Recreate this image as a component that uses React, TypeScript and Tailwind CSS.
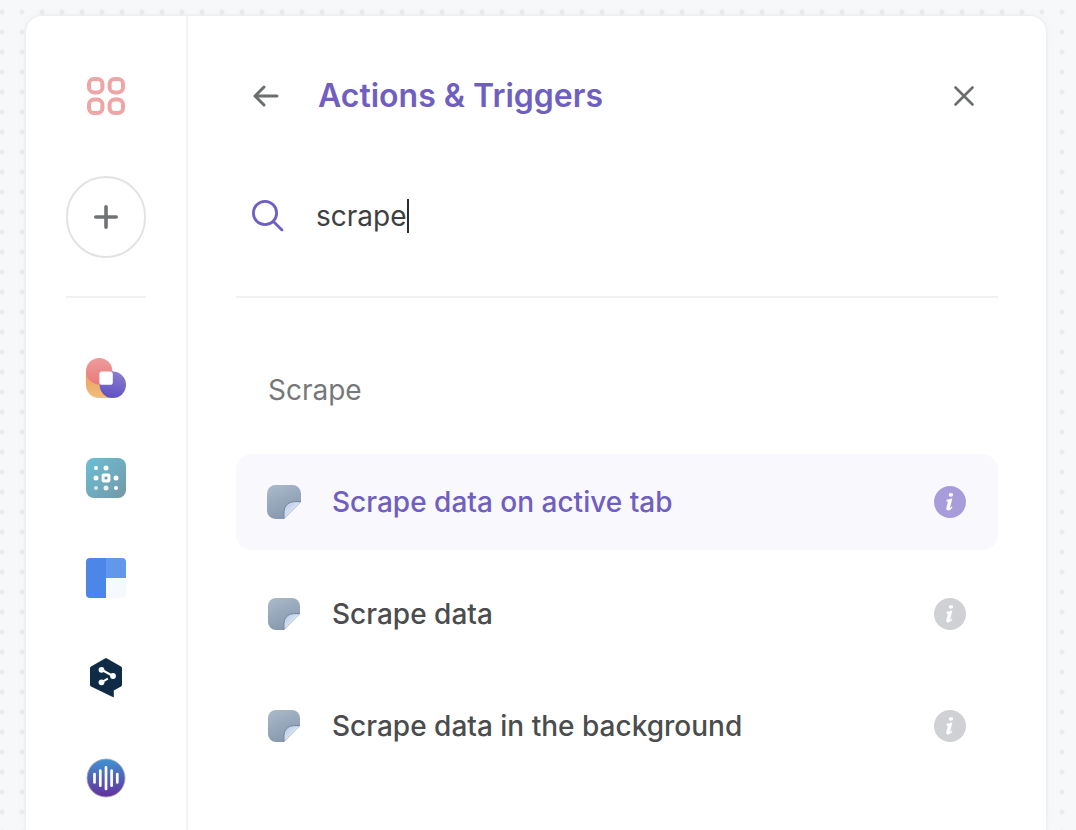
import { useState } from "react";
import clsx from "clsx";

const actions = [
  { id: "active-tab", label: "Scrape data on active tab" },
  { id: "scrape", label: "Scrape data" },
  { id: "background", label: "Scrape data in the background" },
];

function GridIcon() {
  return (
    <svg width="40" height="40" viewBox="0 0 40 40" fill="none" stroke="#eea5a6" strokeWidth="4">
      <rect x="3" y="3" width="13.4" height="13.4" rx="5" />
      <rect x="23.6" y="3" width="13.4" height="13.4" rx="5" />
      <rect x="3" y="23.6" width="13.4" height="13.4" rx="5" />
      <rect x="23.6" y="23.6" width="13.4" height="13.4" rx="5" />
    </svg>
  );
}

function PlusIcon() {
  return (
    <svg width="24" height="24" viewBox="0 0 24 24" stroke="#707374" strokeWidth="3.6" strokeLinecap="round">
      <path d="M12 1.8v20.4M1.8 12h20.4" />
    </svg>
  );
}

function BlobLogo() {
  return (
    <svg width="40" height="40" viewBox="0 0 40 40">
      <defs>
        <linearGradient id="blobRed" x1="0" y1="0" x2="0" y2="1">
          <stop offset="0" stopColor="#ee9c9b" />
          <stop offset="1" stopColor="#e9797c" />
        </linearGradient>
        <linearGradient id="blobBlue" x1="0.6" y1="0" x2="0.4" y2="1">
          <stop offset="0" stopColor="#8c7ccc" />
          <stop offset="1" stopColor="#5c50c6" />
        </linearGradient>
        <linearGradient id="blobYellow" x1="0" y1="0" x2="0" y2="1">
          <stop offset="0" stopColor="#e9a05f" />
          <stop offset="1" stopColor="#f2bd7a" />
        </linearGradient>
      </defs>
      <path d="M0 13h27v27H13A13 13 0 0 1 0 27z" fill="url(#blobYellow)" />
      <circle cx="13.2" cy="13.2" r="13.2" fill="url(#blobRed)" />
      <circle cx="26.8" cy="26.8" r="13.2" fill="url(#blobBlue)" />
      <rect x="13.4" y="13.4" width="13.4" height="13.4" rx="2.6" fill="#fff" />
    </svg>
  );
}

function DotsLogo() {
  return (
    <svg width="40" height="40" viewBox="0 0 40 40" fill="#fff">
      <defs>
        <linearGradient id="dotsBg" x1="0" y1="0" x2="1" y2="1">
          <stop offset="0" stopColor="#6bbfd6" />
          <stop offset="1" stopColor="#7598a6" />
        </linearGradient>
      </defs>
      <rect width="40" height="40" rx="8" fill="url(#dotsBg)" />
      <circle cx="10" cy="10" r="2" />
      <circle cx="20" cy="10" r="2.5" />
      <circle cx="10" cy="20" r="2.5" />
      <circle cx="30" cy="20" r="2.5" />
      <circle cx="10" cy="30" r="2.1" opacity="0.7" />
      <circle cx="20" cy="30" r="2.5" opacity="0.85" />
      <circle cx="30" cy="30" r="2" />
      <rect x="15.6" y="15.6" width="8.8" height="8.8" rx="1.8" />
      <rect x="18.6" y="18.6" width="2.8" height="2.8" fill="#6f98bd" />
    </svg>
  );
}

function BlocksLogo() {
  return (
    <svg width="40" height="40" viewBox="0 0 40 40">
      <path d="M20 0H4a4 4 0 0 0-4 4v32a4 4 0 0 0 4 4h16z" fill="#4c86e9" />
      <path d="M20 0h16a4 4 0 0 1 4 4v16H20z" fill="#6198ea" />
      <path d="M20 20h20v16a4 4 0 0 1-4 4H20z" fill="#f6fafe" />
    </svg>
  );
}

function HexLogo() {
  return (
    <svg width="40" height="40" viewBox="0 0 40 40">
      <path
        d="M19 .4a2 2 0 0 1 2 0l14 8a2 2 0 0 1 1 1.8v16.4a2 2 0 0 1-1 1.8l-7.2 4.2v7L5 28.4a2 2 0 0 1-1-1.8V10.2a2 2 0 0 1 1-1.8z"
        fill="#102b46"
      />
      <path d="M16 12l11 6M15.5 24.3l6.3-3.6" stroke="#fff" strokeWidth="2" />
      <circle cx="15.5" cy="11.8" r="2.9" fill="#fff" />
      <circle cx="27" cy="18" r="2.9" fill="#fff" />
      <circle cx="15.5" cy="24.3" r="2.9" fill="#fff" />
    </svg>
  );
}

function WaveLogo() {
  return (
    <svg width="40" height="40" viewBox="0 0 40 40">
      <defs>
        <linearGradient id="waveBg" x1="0" y1="0" x2="0" y2="1">
          <stop offset="0" stopColor="#3f93d2" />
          <stop offset="1" stopColor="#642f9c" />
        </linearGradient>
      </defs>
      <circle cx="20" cy="20" r="19" fill="url(#waveBg)" stroke="#a8a6b8" strokeWidth="0.8" />
      <path
        d="M8.5 16v8.4M14.3 12.5v15.2M20 9.4v21.6M25.6 12.5v15.2M31.3 16v8.4"
        stroke="#fff"
        strokeWidth="2.7"
        strokeLinecap="round"
      />
    </svg>
  );
}

function StickerIcon({ large }: { large: boolean }) {
  return (
    <svg className={large ? "size-[34px]" : "size-8"} viewBox="0 0 32 32">
      <defs>
        <linearGradient id="stickerBody" x1="0.2" y1="0" x2="0.6" y2="1">
          <stop offset="0" stopColor="#a9b8c9" />
          <stop offset="1" stopColor="#8597ad" />
        </linearGradient>
        <linearGradient id="stickerFold" x1="0" y1="0" x2="0.6" y2="0.6">
          <stop offset="0" stopColor="#b3c3de" />
          <stop offset="1" stopColor="#dce7f8" />
        </linearGradient>
      </defs>
      <path d="M8 0h16a8 8 0 0 1 8 8v8L16 32H8a8 8 0 0 1-8-8V8a8 8 0 0 1 8-8z" fill="url(#stickerBody)" />
      <path d="M31.6 16L16 31.6V25a9.3 9.3 0 0 1 9.3-9.3z" fill="url(#stickerFold)" />
      <path d="M16 31.6V25a9.3 9.3 0 0 1 9.3-9.3h6.5" fill="none" stroke="#71839b" strokeWidth="0.9" />
    </svg>
  );
}

function InfoIcon() {
  return (
    <svg width="32" height="32" viewBox="0 0 32 32">
      <circle cx="16" cy="16" r="16" fill="currentColor" />
      <ellipse cx="16.9" cy="8.9" rx="2.2" ry="1.8" fill="#fff" />
      <path
        d="M12.6 13.8c1.9-.1 3.5-.5 5-1.2l.7.2-2.1 8.2c-.2.8.1 1 .5.7.4-.3.7-.7 1-1.1l.8.5c-1.1 2.1-2.6 3.3-4.3 3.3-1.6 0-2.2-1.1-1.8-2.7l1.4-5.4c.1-.7-.2-1-1.4-1.1z"
        fill="#fff"
      />
    </svg>
  );
}

const apps = [
  { name: "Workspace", icon: <BlobLogo /> },
  { name: "Dots", icon: <DotsLogo /> },
  { name: "Blocks", icon: <BlocksLogo /> },
  { name: "Translate", icon: <HexLogo /> },
  { name: "Audio", icon: <WaveLogo /> },
];

export default function App() {
  const [query, setQuery] = useState("scrape");
  const [selected, setSelected] = useState("active-tab");

  const results = actions.filter((a) => a.label.toLowerCase().includes(query.toLowerCase()));

  return (
    <div className="flex min-h-screen bg-[#f7f8fa] bg-[radial-gradient(circle,#e9ebed_2px,transparent_3px)] bg-size-[20px_20px] bg-position-[-8px_2px] pt-4 pr-[30px] pl-[26px] font-['Inter',sans-serif]">
      <div className="flex flex-1 rounded-t-2xl bg-white shadow-[0_0_3px_1px_rgba(0,0,0,0.05),0_0_20px_rgba(0,0,0,0.02)]">
        <nav className="flex w-[162px] shrink-0 flex-col items-center border-r-2 border-[#f3f3f4] px-10 pt-[60px]">
          <button type="button" aria-label="All apps">
            <GridIcon />
          </button>
          <button
            type="button"
            aria-label="Add app"
            className="mt-[60px] flex h-[82px] w-20 items-center justify-center rounded-full border-2 border-[#e3e3e4]"
          >
            <PlusIcon />
          </button>
          <hr className="mt-[38px] w-full border-t-2 border-[#f1f1f2]" />
          <div className="mt-[60px] flex flex-col gap-[60px]">
            {apps.map((app) => (
              <button key={app.name} type="button" aria-label={app.name}>
                {app.icon}
              </button>
            ))}
          </div>
        </nav>

        <main className="min-w-0 flex-1 px-12 pt-[60px]">
          <header className="flex h-10 items-center pr-6 pl-4">
            <button type="button" aria-label="Back">
              <svg width="28" height="28" viewBox="0 0 28 28" fill="none" stroke="#6b6d6e" strokeWidth="3" strokeLinecap="round" strokeLinejoin="round">
                <path d="M25 14H3M12 5l-9 9 9 9" />
              </svg>
            </button>
            <h1 className="ml-[38px] flex-1 text-[32px] leading-10 font-semibold text-[#6f5fc0]">Actions &amp; Triggers</h1>
            <button type="button" aria-label="Close">
              <svg width="20" height="20" viewBox="0 0 20 20" stroke="#6b6d6e" strokeWidth="2.6" strokeLinecap="round">
                <path d="M1.5 1.5l17 17M18.5 1.5l-17 17" />
              </svg>
            </button>
          </header>

          <label className="mt-20 flex h-10 items-center pl-4">
            <svg width="32" height="32" viewBox="0 0 32 32" fill="none" stroke="#6f5fc0" strokeWidth="2.8" strokeLinecap="round">
              <circle cx="13" cy="13" r="11.6" />
              <path d="M21.4 21.4l8.6 8.6" />
            </svg>
            <input
              type="text"
              aria-label="Search actions"
              value={query}
              onChange={(e) => setQuery(e.target.value)}
              className="ml-8 field-sizing-content text-[28px] leading-10 text-[#3d3f40] caret-transparent outline-none"
            />
            <span className="h-[34px] w-0.5 bg-[#2b2c2d]" />
          </label>

          <hr className="mt-[60px] border-t-2 border-[#f1f1f2]" />

          <h2 className="mt-[72px] pl-8 text-[28px] leading-10 text-[#76787a]">Scrape</h2>

          <ul className="mt-11 flex flex-col gap-4">
            {results.map((action) => {
              const active = action.id === selected;
              return (
                <li
                  key={action.id}
                  className={clsx("flex h-24 items-center rounded-2xl pr-8", active && "bg-[#f8f8fd]")}
                >
                  <button
                    type="button"
                    onClick={() => setSelected(action.id)}
                    className={clsx(
                      "flex h-full min-w-0 flex-1 items-center text-left text-[28px] leading-10 font-medium",
                      active ? "text-[#6f5fc0]" : "text-[#4a4c4d]"
                    )}
                  >
                    <span className="flex w-24 shrink-0 justify-center">
                      <StickerIcon large={active} />
                    </span>
                    {action.label}
                  </button>
                  <button
                    type="button"
                    aria-label={`About ${action.label}`}
                    className={active ? "text-[#a99cdb]" : "text-[#d0d1d5]"}
                  >
                    <InfoIcon />
                  </button>
                </li>
              );
            })}
          </ul>
        </main>
      </div>
    </div>
  );
}
